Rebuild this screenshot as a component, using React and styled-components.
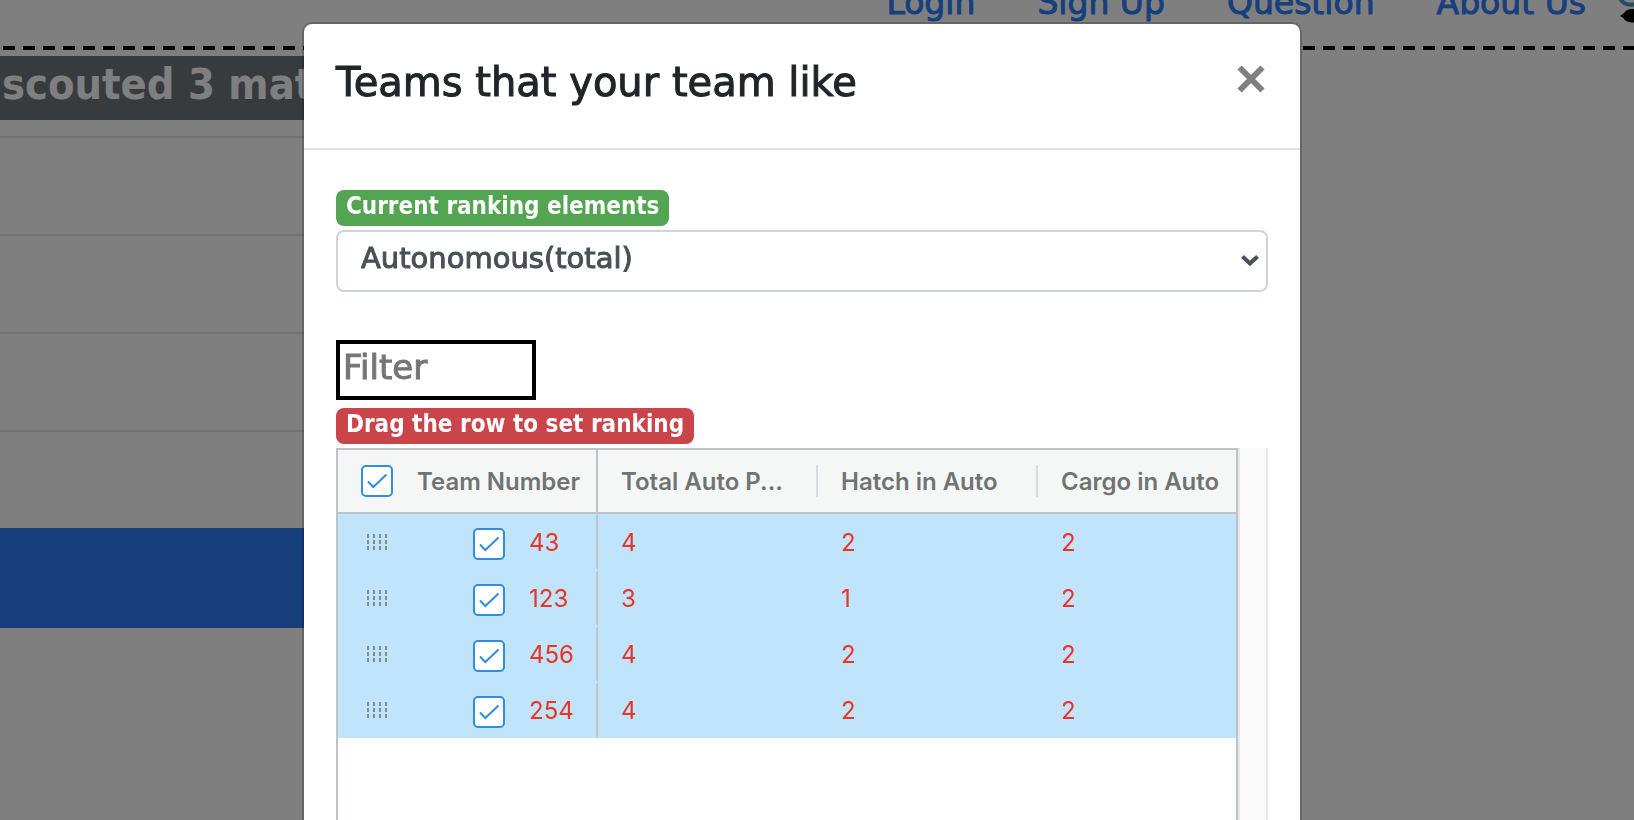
import React, { useState } from "react";
import styled, { createGlobalStyle } from "styled-components";

const display = `"DejaVu Sans", Verdana, sans-serif`;
const displayBold = `"DejaVu Sans Condensed", "DejaVu Sans", Verdana, sans-serif`;
const gridFont = `Inter, -apple-system, "Segoe UI", sans-serif`;
const line = "#bdc3c7";

const GlobalStyle = createGlobalStyle`
  *, *::before, *::after { box-sizing: border-box; }
  html, body { margin: 0; background: #fff; }
  body { font-family: ${display}; color: #212529; overflow: hidden; }
`;

const Nav = styled.nav`
  display: flex;
  align-items: flex-end;
  justify-content: flex-end;
  gap: 62px;
  height: 46px;
  overflow: hidden;
`;

const NavLink = styled.a`
  margin-bottom: 19px;
  font-size: 33px;
  line-height: 48px;
  color: #2e7ef8;
  -webkit-text-stroke: 1px currentColor;
  text-decoration: none;
  white-space: nowrap;
`;

const Logo = styled.svg`
  flex: none;
  display: block;
  margin-left: -31px;
`;

const DashedRule = styled.div`
  height: 4px;
  background: repeating-linear-gradient(to right, transparent 0 3px, #000 3px 15px, transparent 15px 20px);
`;

const Main = styled.main`
  width: 50%;
  margin-top: 6px;
`;

const Banner = styled.h2`
  margin: 0 0 16px;
  height: 64px;
  padding-left: 2px;
  background: #70767c;
  color: #fff;
  font: bold 43px/56px ${displayBold};
  white-space: nowrap;
`;

const Matches = styled.ul`
  list-style: none;
  margin: 0;
  padding: 0;
`;

const Match = styled.li`
  height: ${(p) => (p.$active ? 100 : 98)}px;
  border-top: 2px solid ${(p) => (p.$active ? "#2e7ef8" : "#e2e3e4")};
  background: ${(p) => (p.$active ? "#2e7ef8" : "transparent")};
`;

const Backdrop = styled.div`
  position: fixed;
  inset: 0;
  padding: 22px 30px 0 0;
  background: rgba(0, 0, 0, 0.5);
  overflow-y: auto;
  scrollbar-width: none;
`;

const Dialog = styled.section`
  max-width: 1000px;
  margin: 0 auto 56px;
  border: 2px solid rgba(0, 0, 0, 0.2);
  border-radius: 10px;
  background: #fff;
  background-clip: padding-box;
`;

const DialogHeader = styled.header`
  display: flex;
  justify-content: space-between;
  align-items: flex-start;
  padding: 28px 32px 36px;
  border-bottom: 2px solid #dee2e6;
`;

const Title = styled.h1`
  margin: 0;
  font-size: 40px;
  font-weight: 400;
  line-height: 60px;
  -webkit-text-stroke: 1px currentColor;
`;

const CloseButton = styled.button`
  display: flex;
  margin: 10px 0 0;
  padding: 0;
  border: 0;
  background: none;
  color: #808080;
  cursor: pointer;
`;

const DialogBody = styled.div`
  display: flex;
  flex-direction: column;
  align-items: flex-start;
  padding: 40px 32px 32px;
`;

const Badge = styled.label`
  height: 36px;
  margin-bottom: 4px;
  padding: 0 10px;
  border-radius: 8px;
  background: ${(p) => (p.$tone === "success" ? "#53a551" : "#cb444a")};
  color: #fff;
  font: bold 24px/32px ${displayBold};
  white-space: nowrap;
`;

const SelectWrap = styled.div`
  position: relative;
  width: 100%;
  margin-bottom: 48px;

  svg {
    position: absolute;
    right: 8px;
    top: 24px;
    pointer-events: none;
  }
`;

const Select = styled.select`
  display: block;
  appearance: none;
  width: 100%;
  height: 62px;
  padding: 0 48px 6px 23px;
  border: 2px solid #ced4da;
  border-radius: 8px;
  background: #fff;
  color: #495057;
  font: 29px ${display};
  -webkit-text-stroke: 1px currentColor;
`;

const FilterInput = styled.input`
  width: 200px;
  height: 60px;
  margin: 0 0 8px;
  padding: 0 3px 6px;
  border: 4px solid #000;
  border-radius: 0;
  font: 34px ${display};

  &::placeholder {
    color: #757575;
    opacity: 1;
    -webkit-text-stroke: 1px currentColor;
  }
`;

const Grid = styled.div`
  display: flex;
  width: 100%;
  height: 640px;
`;

const GridViewport = styled.div`
  flex: 1;
  min-width: 0;
  overflow: hidden;
  border: 2px solid ${line};
`;

const ScrollTrack = styled.div`
  flex: none;
  width: 30px;
  background: #fafafa;
  border: solid #e8e8e8;
  border-width: 0 2px;
`;

const Table = styled.table`
  width: 920px;
  table-layout: fixed;
  border-collapse: separate;
  border-spacing: 0;
  font: 24px ${gridFont};
`;

const Col = styled.col`
  width: ${(p) => (p.$pinned ? 260 : 220)}px;
`;

const HeadCell = styled.th`
  height: 64px;
  padding: 0;
  background: #f5f7f7;
  border-bottom: 2px solid ${line};
  border-right: ${(p) => (p.$pinned ? `2px solid ${line}` : "0")};
`;

const HeadContent = styled.div`
  display: flex;
  align-items: center;
  gap: 24px;
  height: 32px;
  padding-left: 23px;
  border-right: ${(p) => (p.$pinned ? "0" : "2px solid #d9dcde")};
  color: #717373;
  font-weight: 600;
  white-space: nowrap;
`;

const Cell = styled.td`
  height: 56px;
  padding: 0 0 0 21px;
  background: #c0e4fc;
  border: 2px solid transparent;
  border-right-color: ${(p) => (p.$pinned ? line : "transparent")};
  color: #ea3323;
`;

const TeamContent = styled.div`
  display: flex;
  align-items: center;
  gap: 24px;
  padding-left: 6px;
`;

const Handle = styled.svg`
  flex: none;
  margin-right: 62px;
  cursor: grab;
`;

const tick = encodeURIComponent(
  `<svg xmlns="http://www.w3.org/2000/svg" width="28" height="28" viewBox="2 2 28 28"><path d="M7 16.5l5.3 5.5L25.5 9.5" fill="none" stroke="#2f8de4" stroke-width="2"/></svg>`
);

const Checkbox = styled.input`
  appearance: none;
  flex: none;
  width: 32px;
  height: 32px;
  margin: ${(p) => (p.$row ? 4 : 0)}px 0 0;
  border: 2px solid #2f8de4;
  border-radius: 5px;
  background: #fff;

  &:checked { background: #fff url("data:image/svg+xml,${tick}") center / 28px no-repeat; }
`;

const links = ["Login", "Sign Up", "Question", "About Us"];
const columns = ["Total Auto P...", "Hatch in Auto", "Cargo in Auto"];
const teams = [
  { team: 43, values: [4, 2, 2] },
  { team: 123, values: [3, 1, 2] },
  { team: 456, values: [4, 2, 2] },
  { team: 254, values: [4, 2, 2] },
];

function DragHandle() {
  return (
    <Handle width="20" height="16" viewBox="0 0 20 16" aria-hidden="true">
      {[1, 7, 13, 19].map((x) => (
        <path key={x} d={`M${x} 0V16`} stroke="#7f8c8d" strokeWidth="2" strokeDasharray="4 2" />
      ))}
    </Handle>
  );
}

export default function App() {
  const [selected, setSelected] = useState(teams.map((t) => t.team));
  const all = selected.length === teams.length;
  const toggle = (team) =>
    setSelected((s) => (s.includes(team) ? s.filter((t) => t !== team) : [...s, team]));

  return (
    <>
      <GlobalStyle />
      <Nav>
        {links.map((l) => (
          <NavLink key={l} href="#">{l}</NavLink>
        ))}
        <Logo width="17" height="46" viewBox="0 0 17 46" aria-hidden="true">
          <path d="M3 -2C5 3 10 5.500 18 4.500" fill="none" stroke="#4a9bc8" strokeWidth="4" />
          <path d="M3 16L7 13C9 9.500 13 8.500 17 9V22.500C12 22.500 8 21.500 6.500 18z" fill="#000" />
        </Logo>
      </Nav>
      <DashedRule />
      <Main>
        <Banner>scouted 3 mat</Banner>
        <Matches>
          <Match />
          <Match />
          <Match />
          <Match />
          <Match $active />
        </Matches>
      </Main>

      <Backdrop>
        <Dialog role="dialog" aria-modal="true" aria-labelledby="dialog-title">
          <DialogHeader>
            <Title id="dialog-title">Teams that your team like</Title>
            <CloseButton type="button" aria-label="Close">
              <svg width="34" height="34" viewBox="0 0 34 34">
                <path d="M5.500 5.500L28.500 28.500M28.500 5.500L5.500 28.500" stroke="currentColor" strokeWidth="6" />
              </svg>
            </CloseButton>
          </DialogHeader>
          <DialogBody>
            <Badge $tone="success" htmlFor="ranking">Current ranking elements</Badge>
            <SelectWrap>
              <Select id="ranking" defaultValue="auto">
                <option value="auto">Autonomous(total)</option>
              </Select>
              <svg width="20" height="14" viewBox="0 0 20 14" aria-hidden="true">
                <path d="M2.500 2.500L10 9.500L17.500 2.500" fill="none" stroke="#495057" strokeWidth="4" />
              </svg>
            </SelectWrap>
            <FilterInput type="text" placeholder="Filter" aria-label="Filter" />
            <Badge $tone="danger" as="span" id="grid-label">Drag the row to set ranking</Badge>
            <Grid>
              <GridViewport>
                <Table aria-labelledby="grid-label">
                  <colgroup>
                    <Col $pinned />
                    {columns.map((c) => <Col key={c} />)}
                  </colgroup>
                  <thead>
                    <tr>
                      <HeadCell $pinned scope="col">
                        <HeadContent $pinned>
                          <Checkbox
                            type="checkbox"
                            aria-label="Select all teams"
                            checked={all}
                            onChange={() => setSelected(all ? [] : teams.map((t) => t.team))}
                          />
                          Team Number
                        </HeadContent>
                      </HeadCell>
                      {columns.map((c) => (
                        <HeadCell key={c} scope="col">
                          <HeadContent>{c}</HeadContent>
                        </HeadCell>
                      ))}
                    </tr>
                  </thead>
                  <tbody>
                    {teams.map(({ team, values }) => (
                      <tr key={team}>
                        <Cell $pinned>
                          <TeamContent>
                            <DragHandle />
                            <Checkbox
                              $row
                              type="checkbox"
                              aria-label={`Select team ${team}`}
                              checked={selected.includes(team)}
                              onChange={() => toggle(team)}
                            />
                            {team}
                          </TeamContent>
                        </Cell>
                        {values.map((v, i) => <Cell key={columns[i]}>{v}</Cell>)}
                      </tr>
                    ))}
                  </tbody>
                </Table>
              </GridViewport>
              <ScrollTrack />
            </Grid>
          </DialogBody>
        </Dialog>
      </Backdrop>
    </>
  );
}
